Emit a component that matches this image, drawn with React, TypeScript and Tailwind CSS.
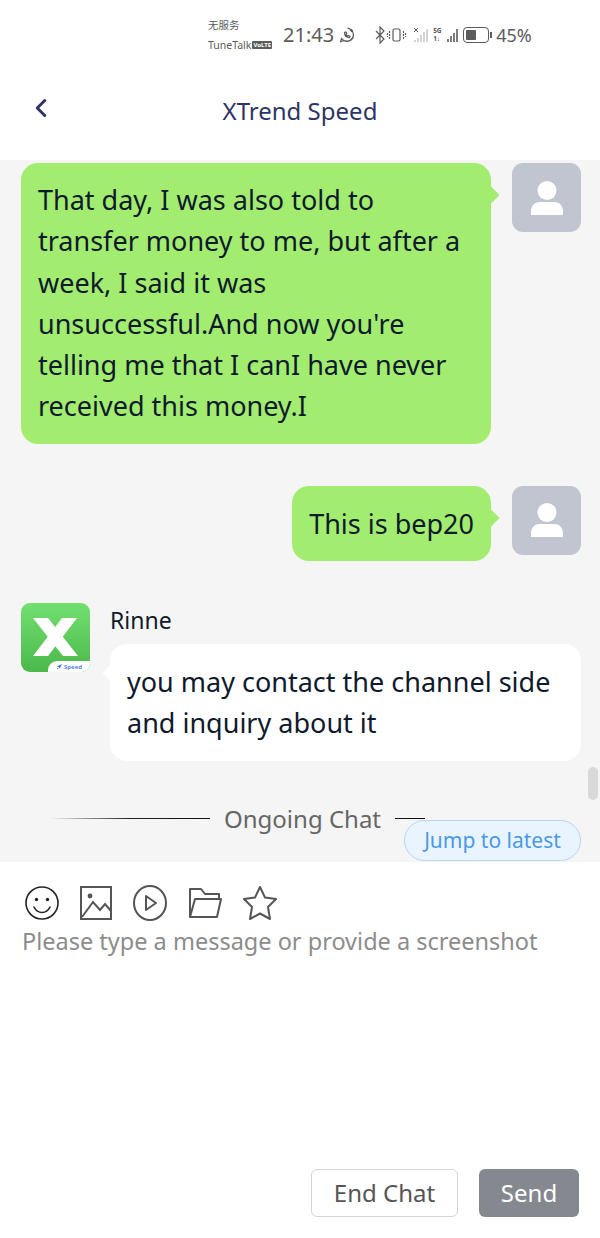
import React from "react";
import { ChevronLeft } from "lucide-react";

const UserAvatar = () => (
  <div className="w-[69px] h-[69px] shrink-0 rounded-[11px] bg-[#c1c5cf] flex items-center justify-center">
    <svg width="32" height="34" viewBox="0 0 32 34" fill="#fff">
      <circle cx="16" cy="9.5" r="9.5" />
      <path d="M0 31c0-7 4-10 9-10h14c5 0 9 3 9 10v3H0z" />
    </svg>
  </div>
);

const BrandAvatar = () => (
  <div className="relative w-[69px] h-[69px] shrink-0 rounded-[9px] overflow-hidden bg-gradient-to-b from-[#72e06f] to-[#4bb84b]">
    <svg className="absolute left-[12px] top-[15px]" width="45" height="38" viewBox="0 0 45 38" fill="#fff">
      <path d="M0 0h15l30 38H30z" />
      <path d="M44 0H29L0 38h15z" />
    </svg>
    <div className="absolute right-0 bottom-0 w-[42px] h-[11px] bg-white rounded-tl-[9px] flex items-center justify-center gap-[2px] text-[6px] leading-none font-bold text-[#5b83dc]">
      <svg width="6" height="6" viewBox="0 0 6 6" fill="#3f6fd8">
        <path d="M6 0 3.6 4.8 2.8 3.2 1 2.4z" />
        <path d="M1.6 3.6 2.4 4.4 0.6 5.6z" />
      </svg>
      Speed
    </div>
  </div>
);

const StatusBar = () => (
  <div className="h-[70px] pl-[208px] flex items-center text-[#5c5c5c] bg-white">
    <div className="w-[70px] h-[34px] flex flex-col justify-between">
      <span className="text-[10.5px] leading-[14px] font-['Noto_Sans_CJK_SC',sans-serif]">无服务</span>
      <div className="flex items-center gap-[1px]">
        <span className="text-[10.5px] leading-[14px]">TuneTalk</span>
        <span className="bg-[#5c5c5c] text-white text-[6px] leading-[8px] rounded-[1px] px-[1px] font-bold">VoLTE</span>
      </div>
    </div>
    <span className="ml-[5px] text-[20px] leading-none">21:43</span>
    <svg className="ml-[5px]" width="16" height="16" viewBox="0 0 16 16" fill="none" stroke="#5c5c5c" strokeWidth="1.2">
      <path d="M8.5 1.2A6.5 6.5 0 1 1 2.6 11.5L1.6 14.6l3.2-1A6.5 6.5 0 0 0 14.5 8" />
      <path d="M5.5 5.5c0 3 2 5 5 5.2l.6-1.5-1.6-.8-.8.7c-.8-.4-1.4-1-1.7-1.8l.7-.8-.7-1.6z" />
      <path d="M12.5 2v3M11 3.5h3" />
    </svg>
    <svg className="ml-[19px]" width="88" height="18" viewBox="0 0 88 18" fill="none" stroke="#5c5c5c" strokeWidth="1.2">
      <path d="M2 5l8 8-4 4V1l4 4-8 8" />
      <rect x="19" y="3" width="7" height="12" rx="1.5" />
      <path d="M15.5 5v8M29.5 5v8M13.5 7v4M31.5 7v4" strokeDasharray="2 1" />
      <path d="M40 2l4 4M44 2l-4 4" strokeWidth="1" />
      <path d="M41 14v2M44 12v4M47 9v7M50 6v10M53 3v13" stroke="#c4c4c4" strokeWidth="1.4" />
      <path d="M74 13v3M77 10v6M80 7v9M83 3v13" strokeWidth="1.6" />
    </svg>
    <span className="-ml-[29px] w-[12px] text-[6.5px] leading-[8px] font-bold">5G<br />1↓</span>
    <div className="ml-[18px] flex items-center">
      <div className="w-[26px] h-[16px] rounded-[4px] border-[1.5px] border-[#5c5c5c] p-[2px]">
        <div className="w-[10px] h-full bg-[#5c5c5c] rounded-[1px]" />
      </div>
      <div className="ml-[1px] w-[2px] h-[6px] bg-[#5c5c5c]" />
    </div>
    <span className="ml-[4px] text-[18px] leading-none">45%</span>
  </div>
);

const Bubble = ({ side, children }: { side: "left" | "right"; children: React.ReactNode }) => (
  <div
    className={`relative rounded-[17px] px-[17px] py-[17px] text-[27px] leading-[41.3px] text-[#0f1a2d] ${
      side === "right" ? "bg-[#a2ec6f]" : "bg-white"
    }`}
  >
    {side === "right" ? (
      <span className="absolute -right-[8px] top-[24px] w-[16px] h-[16px] rotate-45 bg-[#a2ec6f] scale-75" />
    ) : (
      <span className="absolute -left-[7px] top-[22px] w-[14px] h-[14px] rotate-45 bg-white scale-75" />
    )}
    <span className="relative">{children}</span>
  </div>
);

export default function App() {
  return (
    <div className="w-[600px] h-[1238px] flex flex-col bg-white overflow-hidden font-['Noto_Sans',sans-serif]">
      <StatusBar />

      <div className="h-[90px] relative flex items-center justify-center pb-[8px]">
        <ChevronLeft className="absolute left-[26px] top-[23px] text-[#2e3566]" size={30} strokeWidth={2.4} />
        <span className="text-[24px] leading-none text-[#2e3566]">XTrend Speed</span>
      </div>

      <div className="relative h-[702px] bg-[#f5f5f5] pt-[3px] overflow-hidden">
        <div className="flex justify-end gap-[21px] pl-[21px] pr-[19px]">
          <div className="w-[470px]">
            <Bubble side="right">
              <span className="block -mt-[1px]">
                That day, I was also told to transfer money to me, but after a week, I said it was unsuccessful.And now you're telling me that I canI have never received this money.I
              </span>
            </Bubble>
          </div>
          <UserAvatar />
        </div>

        <div className="mt-[42px] flex justify-end gap-[21px] pr-[19px]">
          <Bubble side="right">This is bep20</Bubble>
          <UserAvatar />
        </div>

        <div className="mt-[42px] flex gap-[20px] pl-[21px] pr-[19px]">
          <BrandAvatar />
          <div className="flex-1">
            <div className="text-[23px] leading-[32px] text-[#0f1a2d] mt-[1px] mb-[8px]">Rinne</div>
            <Bubble side="left">you may contact the channel side and inquiry about it</Bubble>
          </div>
        </div>

        <div className="mt-[42px] flex items-center pl-[50px] text-[#666]">
          <div className="w-[160px] h-[1.5px] bg-gradient-to-r from-transparent via-[#222] to-[#111]" />
          <span className="mx-[14px] text-[24px] leading-[32px]">Ongoing Chat</span>
          <div className="w-[30px] h-[1.5px] bg-[#111]" />
        </div>

        <div className="absolute right-[19px] top-[660px] w-[177px] h-[41px] rounded-full border border-[#b5d6f5] bg-[#e9f4fe] flex items-center justify-center text-[21px] text-[#4a9ae8]">
          Jump to latest
        </div>
        <div className="absolute right-[2px] top-[607px] w-[10px] h-[33px] rounded-full bg-[#d9d9d9]" />
      </div>

      <div className="flex-1 flex flex-col px-[21px] pt-[22px] pb-[21px] min-h-0">
        <div className="flex items-center gap-[19px] h-[38px] pl-[3px] text-[#555]">
          <svg width="36" height="36" viewBox="0 0 36 36" fill="none" stroke="#222" strokeWidth="1.6">
            <circle cx="18" cy="18" r="16" />
            <circle cx="12.5" cy="14.5" r="1.7" fill="#222" stroke="none" />
            <circle cx="23.5" cy="14.5" r="1.7" fill="#222" stroke="none" />
            <path d="M10 22c2 4 5 5.5 8 5.5s6-1.5 8-5.5" strokeLinecap="round" />
          </svg>
          <svg width="34" height="36" viewBox="0 0 34 36" fill="none" stroke="#555" strokeWidth="2">
            <rect x="2" y="2" width="30" height="32" />
            <circle cx="11" cy="11" r="2.4" fill="#555" stroke="none" />
            <path d="M3 32l11-15 7 8 5-6 6 7" />
          </svg>
          <svg width="36" height="38" viewBox="0 0 36 38" fill="none" stroke="#555" strokeWidth="2">
            <ellipse cx="18" cy="19" rx="16" ry="17" />
            <path d="M14 12l10 7-10 7z" strokeLinejoin="round" />
          </svg>
          <svg width="36" height="32" viewBox="0 0 36 32" fill="none" stroke="#555" strokeWidth="2" strokeLinejoin="round">
            <path d="M3 30V2h11l4 5h14v5" />
            <path d="M3 30h27l4-18H8z" />
          </svg>
          <svg width="36" height="36" viewBox="0 0 36 36" fill="none" stroke="#555" strokeWidth="2" strokeLinejoin="round">
            <path d="M18 2l5 10.5 11 1.5-8 8 2 12-10-5.5L8 34l2-12-8-8 11-1.5z" />
          </svg>
        </div>
        <div className="text-[23.5px] leading-[32px] text-[#8c8c8c] mt-[3px] pl-[1px]">
          Please type a message or provide a screenshot
        </div>
        <div className="mt-auto flex justify-end gap-[21px] pr-[0px]">
          <button className="w-[147px] h-[48px] rounded-[6px] border border-[#d4d4d4] bg-white text-[24px] text-[#555]">End Chat</button>
          <button className="w-[100px] h-[48px] rounded-[6px] bg-[#85888f] text-[24px] text-white">Send</button>
        </div>
      </div>
    </div>
  );
}
